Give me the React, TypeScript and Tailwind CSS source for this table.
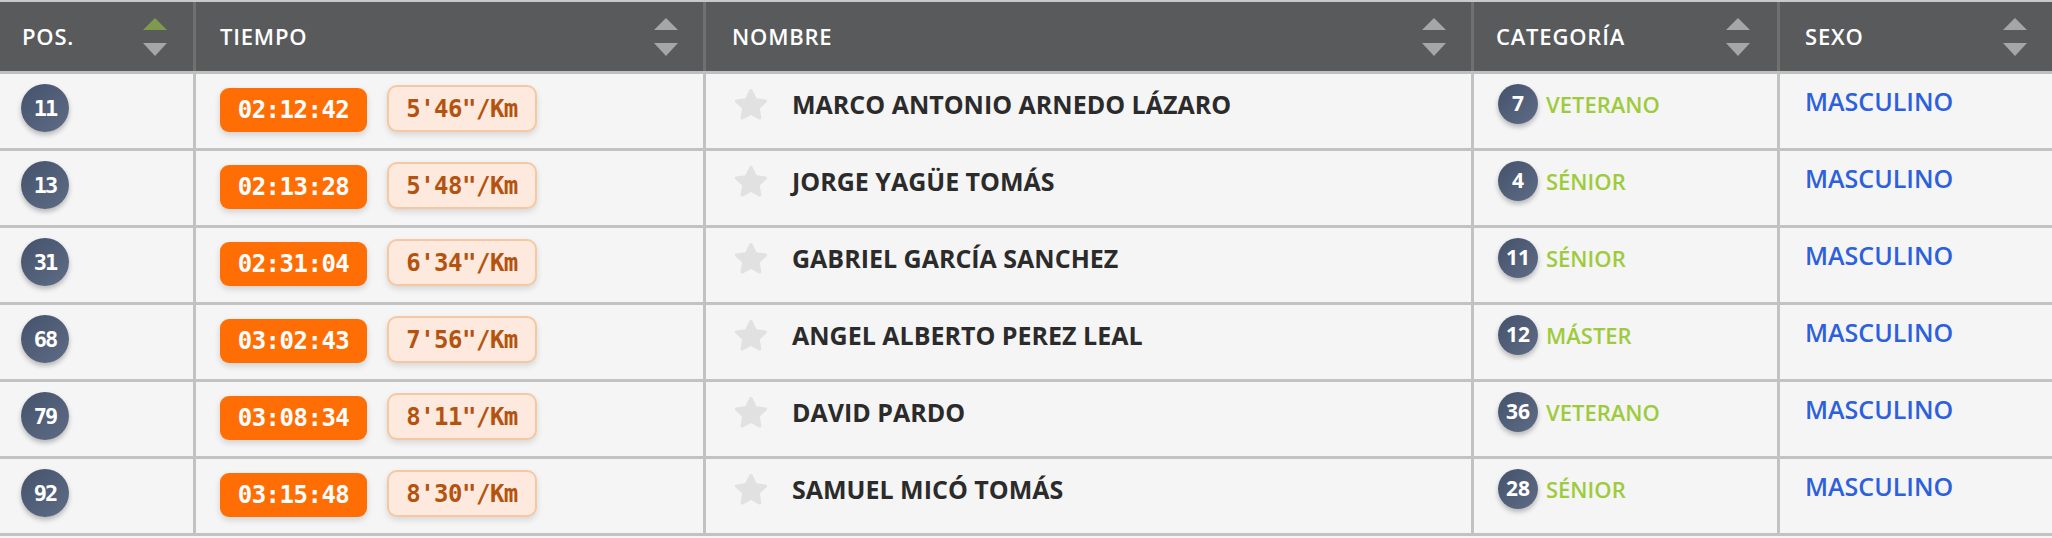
import React from "react";

type Fila = {
  pos: number;
  tiempo: string;
  ritmo: string;
  nombre: string;
  catPos: number;
  categoria: string;
  sexo: string;
};

const filas: Fila[] = [
  { pos: 11, tiempo: "02:12:42", ritmo: "5'46\"/Km", nombre: "MARCO ANTONIO ARNEDO LÁZARO", catPos: 7, categoria: "VETERANO", sexo: "MASCULINO" },
  { pos: 13, tiempo: "02:13:28", ritmo: "5'48\"/Km", nombre: "JORGE YAGÜE TOMÁS", catPos: 4, categoria: "SÉNIOR", sexo: "MASCULINO" },
  { pos: 31, tiempo: "02:31:04", ritmo: "6'34\"/Km", nombre: "GABRIEL GARCÍA SANCHEZ", catPos: 11, categoria: "SÉNIOR", sexo: "MASCULINO" },
  { pos: 68, tiempo: "03:02:43", ritmo: "7'56\"/Km", nombre: "ANGEL ALBERTO PEREZ LEAL", catPos: 12, categoria: "MÁSTER", sexo: "MASCULINO" },
  { pos: 79, tiempo: "03:08:34", ritmo: "8'11\"/Km", nombre: "DAVID PARDO", catPos: 36, categoria: "VETERANO", sexo: "MASCULINO" },
  { pos: 92, tiempo: "03:15:48", ritmo: "8'30\"/Km", nombre: "SAMUEL MICÓ TOMÁS", catPos: 28, categoria: "SÉNIOR", sexo: "MASCULINO" },
];

// Flechas de ordenar (la de arriba verde si la columna está activa)
const Orden = ({ activo = false }: { activo?: boolean }) => (
  <svg width="24" height="38" viewBox="0 0 24 38">
    <polygon points="12,0 24,12 0,12" fill={activo ? "#7f9a4c" : "#a6a6a6"} />
    <polygon points="0,25 24,25 12,38" fill="#a6a6a6" />
  </svg>
);

const Estrella = () => (
  <svg width="38" height="36" viewBox="0 0 24 23">
    <path
      d="M12 1.2c.4 0 .7.2.9.6l2.6 5.4 5.9.8c.8.1 1.1 1.1.5 1.7l-4.3 4.1 1 5.9c.1.8-.7 1.4-1.4 1l-5.2-2.8-5.3 2.8c-.7.4-1.5-.2-1.4-1l1-5.9-4.3-4.1c-.6-.6-.3-1.6.5-1.7l5.9-.8 2.6-5.4c.2-.4.5-.6.9-.6z"
      fill="#e1e1e1"
    />
  </svg>
);

const cabeceras = [
  { titulo: "POS.", activo: true, pad: "pl-[22px] pr-[26px]" },
  { titulo: "TIEMPO", activo: false, pad: "pl-[24px] pr-[25px]" },
  { titulo: "NOMBRE", activo: false, pad: "pl-[26px] pr-[25px]" },
  { titulo: "CATEGORÍA", activo: false, pad: "pl-[22px] pr-[27px]" },
  { titulo: "SEXO", activo: false, pad: "pl-[25px] pr-[25px]" },
];

const cols = "grid grid-cols-[196px_510px_768px_306px_272px]";

export default function App() {
  return (
    <div className="w-[2052px] h-[538px] overflow-hidden bg-[#f5f5f5] font-['Open_Sans',sans-serif]">
      {/* Cabecera */}
      <div className={`${cols} h-[74px] border-t-2 border-b-[3px] border-t-[#c9c9c9] border-b-[#bfbfbf] bg-[#595a5c]`}>
        {cabeceras.map((c, i) => (
          <div
            key={c.titulo}
            className={`flex items-center justify-between ${c.pad} ${i < 4 ? "border-r-[3px] border-[#707070]" : ""}`}
          >
            <span className="text-white text-[22px] font-semibold tracking-[0.8px]">{c.titulo}</span>
            <Orden activo={c.activo} />
          </div>
        ))}
      </div>

      {filas.map((f) => (
        <div key={f.pos} className={`${cols} h-[77px] border-b-[3px] border-[#c2c2c2] bg-[#f5f5f5]`}>
          <div className="border-r-[3px] border-[#c2c2c2] pl-[21px] pt-[10px]">
            <div className="w-[48px] h-[48px] rounded-full bg-linear-to-br from-[#45526c] to-[#5e6c86] shadow-[0_3px_5px_rgba(0,0,0,0.25)] flex items-center justify-center text-white text-[22px] font-bold font-['DejaVu_Sans_Mono',monospace] tracking-[-2px]">
              {f.pos}
            </div>
          </div>

          <div className="border-r-[3px] border-[#c2c2c2] pl-[24px] pt-[11px]">
            <div className="flex items-end gap-[20px]">
              <div className="h-[44px] w-[147px] rounded-[9px] bg-[#ff6e04] shadow-[0_3px_6px_rgba(0,0,0,0.15)] flex items-center justify-center text-white text-[24px] font-bold font-['DejaVu_Sans_Mono',monospace] tracking-[-0.5px]">
                {f.tiempo}
              </div>
              <div className="h-[47px] w-[150px] rounded-[10px] border-2 border-[#f6c8a2] bg-[#fde9dd] shadow-[0_3px_6px_rgba(0,0,0,0.12)] flex items-center justify-center text-[#b4530f] text-[24px] font-bold font-['DejaVu_Sans_Mono',monospace] tracking-[-0.5px]">
                {f.ritmo}
              </div>
            </div>
          </div>

          <div className="border-r-[3px] border-[#c2c2c2] pl-[26px] pt-[13px] flex items-start gap-[22px]">
            <Estrella />
            <span className="text-[#2b2b2b] text-[25px] font-bold leading-[35px]">{f.nombre}</span>
          </div>

          <div className="border-r-[3px] border-[#c2c2c2] pl-[24px] pt-[10px] flex items-start gap-[8px]">
            <div className="w-[40px] h-[40px] rounded-full bg-linear-to-br from-[#45526c] to-[#5e6c86] shadow-[0_3px_5px_rgba(0,0,0,0.25)] flex items-center justify-center text-white text-[21px] font-bold">
              {f.catPos}
            </div>
            <span className="text-[#9ecb3c] text-[22px] leading-[40px] font-semibold">{f.categoria}</span>
          </div>

          <div className="pl-[25px] pt-[10px]">
            <span className="text-[#2d60dc] text-[25px] font-semibold leading-[35px]">{f.sexo}</span>
          </div>
        </div>
      ))}
    </div>
  );
}
